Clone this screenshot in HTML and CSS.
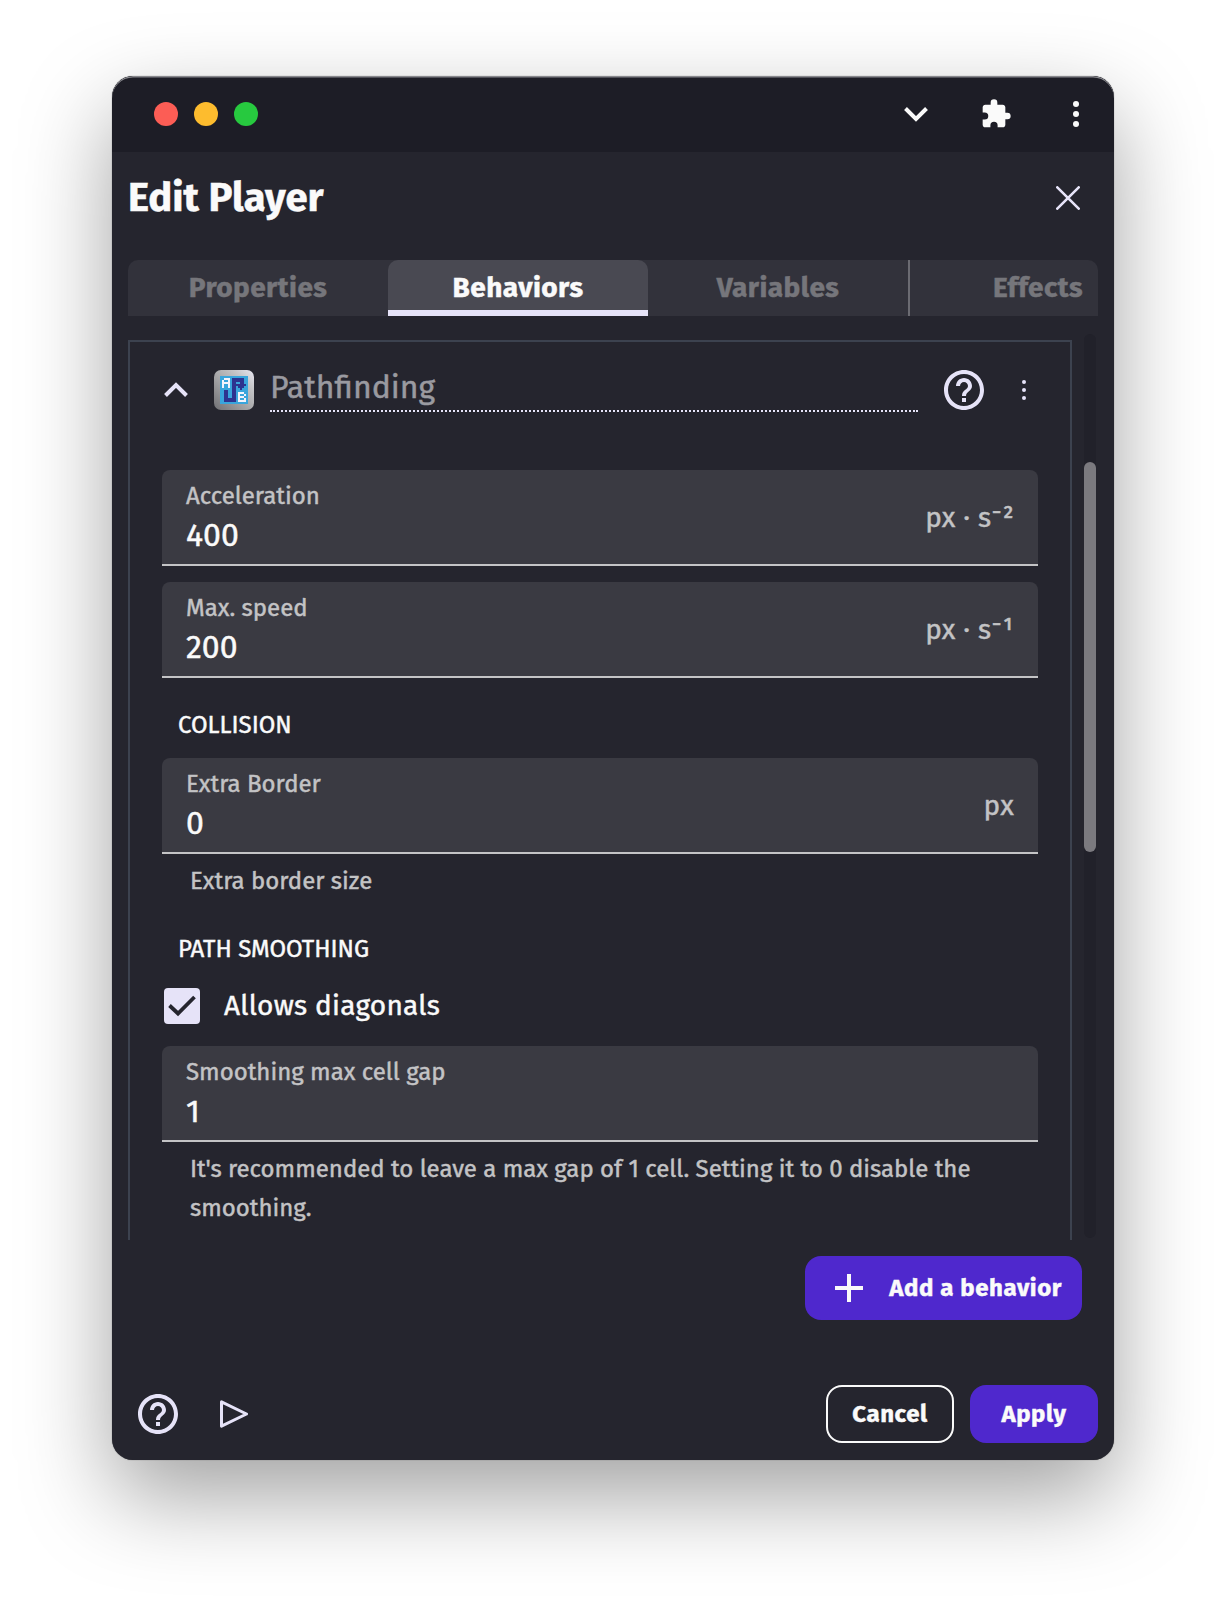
FILE: index.html
```
<!DOCTYPE html>
<html lang="en">
<head>
<meta charset="utf-8">
<title>Edit Player</title>
<link rel="stylesheet" href="styles.css">
</head>
<body>
<main class="window">
  <div class="titlebar">
    <div class="lights"><i class="red"></i><i class="yellow"></i><i class="green"></i></div>
    <div class="window-actions">
      <svg width="24" height="16" viewBox="0 0 24 16"><path d="M1.500 2.500 12 13 22.500 2.500" fill="none" stroke="#fafafa" stroke-width="4"/></svg>
      <svg width="32" height="32" viewBox="0 0 24 24"><path fill="#fafafa" d="M20.500 11H19V7c0-1.100-.9-2-2-2h-4V3.500a2.500 2.500 0 0 0-5 0V5H4c-1.100 0-2 .9-2 2v3.800h1.500a2.700 2.700 0 0 1 0 5.400H2V20c0 1.100.9 2 2 2h3.800v-1.500a2.700 2.700 0 0 1 5.400 0V22H17c1.100 0 2-.9 2-2v-4h1.500a2.500 2.500 0 0 0 0-5z"/></svg>
      <svg width="6" height="28" viewBox="0 0 6 28" fill="#fafafa"><circle cx="3" cy="4" r="3"/><circle cx="3" cy="14" r="3"/><circle cx="3" cy="24" r="3"/></svg>
    </div>
  </div>

  <header class="dialog-header">
    <h1>Edit Player</h1>
    <svg width="24" height="24" viewBox="0 0 24 24"><path d="M1.300 1.300 22.700 22.700M22.700 1.300 1.300 22.700" stroke="#e6e3f8" stroke-width="2.600" stroke-linecap="round"/></svg>
  </header>

  <nav class="tabs">
    <a class="tab">Properties</a>
    <a class="tab active">Behaviors</a>
    <a class="tab">Variables</a>
    <a class="tab divided">Effects</a>
  </nav>

  <div class="content">
    <section class="panel">
      <div class="behavior">
        <svg class="chevron" width="24" height="16" viewBox="0 0 24 16"><path d="M1.500 13.500 12 3 22.500 13.500" fill="none" stroke="#e6e3f8" stroke-width="4"/></svg>
        <svg class="behavior-icon" width="40" height="40" viewBox="0 0 20 20" shape-rendering="crispEdges">
          <defs><linearGradient id="metal" x1="1" y1="0" x2="0" y2="1"><stop offset="0" stop-color="#e9e7f2"/><stop offset=".25" stop-color="#c6c6c8"/><stop offset=".6" stop-color="#a0a0a2"/><stop offset="1" stop-color="#6f6f73"/></linearGradient></defs>
          <rect width="20" height="20" rx="3.500" fill="url(#metal)" shape-rendering="auto"/>
          <path fill="#39a5dc" d="M3 3h14v14H3z"/>
          <path fill="#2d338f" d="M5 10h2v4h2V4h6v3h1v1h-1v1h-1v1h-1V9h-1V8h-1V7h2V6h-2v10H5z"/>
          <path fill="#f4f4fc" fill-rule="evenodd" d="M5 4h3v5H7V7H5v2H4V5h1zM5 5v1h2V5zM12 11h3v1h1v1h-1v1h1v2h-4zM13 12v1h2v-1zM13 14v1h2v-1z"/>
        </svg>
        <div class="behavior-name">Pathfinding</div>
        <svg class="help" width="40" height="40" viewBox="2 2 20 20"><path fill="#e6e3f8" d="M11 18h2v-2h-2v2zm1-16C6.480 2 2 6.480 2 12s4.480 10 10 10 10-4.480 10-10S17.520 2 12 2zm0 18c-4.410 0-8-3.590-8-8s3.590-8 8-8 8 3.590 8 8-3.590 8-8 8zm0-14c-2.210 0-4 1.790-4 4h2c0-1.100.9-2 2-2s2 .9 2 2c0 2-3 1.750-3 5h2c0-2.250 3-2.500 3-5 0-2.210-1.790-4-4-4z"/></svg>
        <svg class="more" width="4" height="20" viewBox="0 0 4 20" fill="#e6e3f8"><circle cx="2" cy="2" r="2"/><circle cx="2" cy="10" r="2"/><circle cx="2" cy="18" r="2"/></svg>
      </div>

      <div class="field">
        <div><label>Acceleration</label><div class="value">400</div></div>
        <span class="unit">px · s⁻²</span>
      </div>
      <div class="field stacked">
        <div><label>Max. speed</label><div class="value">200</div></div>
        <span class="unit">px · s⁻¹</span>
      </div>

      <h2>COLLISION</h2>
      <div class="field">
        <div><label>Extra Border</label><div class="value">0</div></div>
        <span class="unit">px</span>
      </div>
      <p class="helper">Extra border size</p>

      <h2 class="smoothing">PATH SMOOTHING</h2>
      <div class="check-row">
        <span class="checkbox"><svg width="36" height="36" viewBox="0 0 36 36"><path d="M5.500 17.500 14 25.500 30.500 9" fill="none" stroke="#25252e" stroke-width="3.800"/></svg></span>
        <span class="check-label">Allows diagonals</span>
      </div>
      <div class="field">
        <div><label>Smoothing max cell gap</label><div class="value">1</div></div>
      </div>
      <p class="helper">It's recommended to leave a max gap of 1 cell. Setting it to 0 disable the<br>smoothing.</p>
    </section>
    <div class="track"><div class="thumb"></div></div>
  </div>

  <div class="add-row">
    <button class="button add"><svg width="28" height="28" viewBox="0 0 28 28"><path d="M14 0v28M0 14h28" stroke="#fafafa" stroke-width="4"/></svg>Add a behavior</button>
  </div>

  <footer class="footer">
    <svg width="40" height="40" viewBox="2 2 20 20"><path fill="#e6e3f8" d="M11 18h2v-2h-2v2zm1-16C6.480 2 2 6.480 2 12s4.480 10 10 10 10-4.480 10-10S17.520 2 12 2zm0 18c-4.410 0-8-3.590-8-8s3.590-8 8-8 8 3.590 8 8-3.590 8-8 8zm0-14c-2.210 0-4 1.790-4 4h2c0-1.100.9-2 2-2s2 .9 2 2c0 2-3 1.750-3 5h2c0-2.250 3-2.500 3-5 0-2.210-1.790-4-4-4z"/></svg>
    <svg class="play" width="28" height="28" viewBox="0 0 28 28"><path d="M1.500 1.800 26.500 14 1.500 26.200z" fill="none" stroke="#e6e3f8" stroke-width="3" stroke-linejoin="round"/></svg>
    <button class="button cancel">Cancel</button>
    <button class="button apply">Apply</button>
  </footer>
</main>
</body>
</html>
```
FILE: styles.css
```
* { box-sizing: border-box; }
body {
  margin: 0;
  height: 1608px;
  padding: 76px 112px 0;
  background: #fff;
  overflow: hidden;
  font-family: "Fira Sans", "Noto Sans", sans-serif;
  color: #fafafa;
  -webkit-text-stroke: .45px currentColor;
}
svg { display: block; flex: none; }
.window {
  width: 1002px;
  height: 1384px;
  border-radius: 21px;
  overflow: hidden;
  background: #25252e;
  box-shadow: 0 0 1px 0 rgba(0,0,0,.6), 0 36px 90px 0 rgba(0,0,0,.37);
  display: flex;
  flex-direction: column;
}
.titlebar {
  height: 76px;
  flex: none;
  padding: 0 35px 0 42px;
  display: flex;
  align-items: center;
  justify-content: space-between;
  background: #1d1d26;
  border-radius: 21px 21px 0 0;
  box-shadow: inset 0 1.500px 0 #88888d;
}
.lights { display: flex; gap: 16px; }
.lights i { width: 24px; height: 24px; border-radius: 50%; }
.red { background: #fc5d55; }
.yellow { background: #fdbc2e; }
.green { background: #27c93f; }
.window-actions { display: flex; align-items: center; gap: 52px; }
.window-actions svg:last-child { margin-left: 9px; }
.dialog-header {
  height: 108px;
  flex: none;
  padding: 18px 34px 0 16px;
  display: flex;
  justify-content: space-between;
}
.dialog-header svg { margin-top: 16px; }
h1 { margin: 0; font-size: 40px; line-height: 56px; font-weight: 700; }
.tabs {
  height: 56px;
  flex: none;
  margin: 0 16px;
  display: flex;
  background: #32323b;
  border-radius: 10px 10px 0 0;
  overflow: hidden;
}
.tab {
  flex: 0 0 260px;
  text-align: center;
  font-size: 28px;
  line-height: 56px;
  font-weight: 700;
  letter-spacing: .45px;
  color: #76767b;
}
.tab.active { color: #fafafa; background: #494952; border-bottom: 6px solid #e6e3f8; border-radius: 10px 10px 0 0; }
.tab.divided { background: linear-gradient(#6b6b72, #6b6b72) 0 0 / 2px 100% no-repeat; }
.content {
  height: 900px;
  flex: none;
  margin: 24px 16px 0;
  display: flex;
  justify-content: space-between;
}
.panel {
  width: 944px;
  overflow: hidden;
  padding: 28px 32px 0;
  border: 2px solid #3c424f;
  border-bottom: 0;
}
.behavior { height: 100px; display: flex; align-items: flex-start; }
.chevron { margin: 12px 0 0 2px; }
.behavior-icon { margin-left: 26px; }
.behavior-name {
  width: 648px;
  height: 48px;
  margin: -6px 0 0 16px;
  font-size: 32px;
  line-height: 47px;
  color: #9a9aa0;
  border-bottom: 2px dotted #e6e3f8;
}
.help { margin-left: 26px; }
.more { margin: 10px 0 0 38px; }
.field {
  height: 96px;
  padding: 12px 24px 0;
  display: flex;
  justify-content: space-between;
  background: #3a3a42;
  border-bottom: 2px solid #c4c4c6;
  border-radius: 8px 8px 0 0;
}
.stacked { margin-top: 16px; }
label { display: block; font-size: 24px; line-height: 28px; color: #c3c3c5; }
.value { margin-top: 6px; font-size: 32px; line-height: 38px; color: #fafafa; }
.unit { margin-top: -10px; font-size: 28px; line-height: 92px; letter-spacing: .26px; color: #c3c3c5; }
h2 {
  margin: 0;
  height: 80px;
  padding: 27px 16px 0;
  font-size: 24px;
  line-height: 40px;
  font-weight: 400;
  color: #fafafa;
}
h2.smoothing { padding-top: 1px; margin-top: 27px; height: 40px; }
.helper { margin: 8px 0 0; padding-left: 28px; font-size: 24px; line-height: 39px; color: #c3c3c5; white-space: nowrap; }
.check-row { height: 78px; padding: 20px 0 0 2px; display: flex; }
.checkbox { width: 36px; height: 36px; border-radius: 4px; background: #e6e3f8; }
.check-label { margin-left: 24px; font-size: 28px; line-height: 35px; letter-spacing: .26px; }
.track {
  width: 12px;
  height: 904px;
  margin: -6px 2px 0 0;
  padding-top: 128px;
  border-radius: 6px;
  background: #21212a;
}
.thumb { height: 390px; border-radius: 6px; background: #7b7a7f; }
.button {
  border: 0;
  padding: 0;
  border-radius: 16px;
  display: flex;
  align-items: center;
  justify-content: center;
  font-family: inherit;
  font-size: 24px;
  line-height: 32px;
  font-weight: 700;
  letter-spacing: .6px;
  color: #fafafa;
  background: #4f28cd;
  -webkit-text-stroke: .45px currentColor;
}
.add-row { flex: none; padding: 16px 32px 0; display: flex; justify-content: flex-end; }
.add { width: 277px; height: 64px; padding: 0 20px 0 30px; justify-content: space-between; }
.footer { flex: none; margin-top: 65px; padding: 0 16px 0 26px; display: flex; align-items: center; }
.play { margin-left: 42px; }
.cancel { width: 128px; height: 58px; margin-left: auto; background: none; border: 2px solid #fafafa; }
.apply { width: 128px; height: 58px; margin-left: 16px; }
```
